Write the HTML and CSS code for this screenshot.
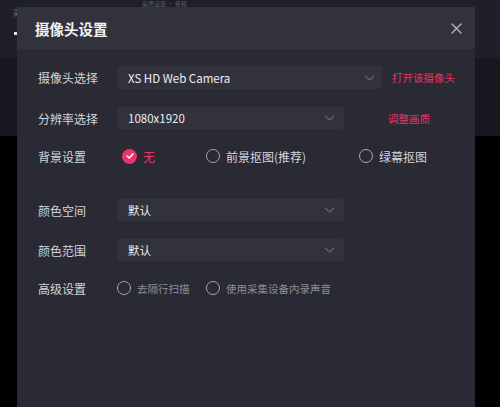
FILE: index.html
```html
<!DOCTYPE html>
<html lang="zh">
<head>
<meta charset="utf-8">
<link rel="stylesheet" href="styles.css">
</head>
<body>
<div class="page">
  <div class="topbar">
    <div class="bg-left">
      <span class="bg-small">采</span>
      <span class="bg-mark"></span>
    </div>
    <div class="bg-tabs">画质设置 · 音频</div>
  </div>
  <div class="band"></div>
  <div class="rest"></div>

  <div class="dialog">
    <div class="dlg-head">
      <span class="dlg-title">摄像头设置</span>
      <svg class="close" width="11" height="11" viewBox="0 0 11 11"><path d="M1 1L10 10M10 1L1 10" stroke="#b4b4bc" stroke-width="1.4" stroke-linecap="round"/></svg>
    </div>
    <div class="dlg-body">
      <div class="row r1">
        <span class="label">摄像头选择</span>
        <div class="select wide"><span>XS HD Web Camera</span><svg class="chev" width="11" height="6" viewBox="0 0 11 6"><path d="M1 1L5.5 5L10 1" fill="none" stroke="#666672" stroke-width="1.2"/></svg></div>
        <a class="link l1">打开该摄像头</a>
      </div>
      <div class="row r2">
        <span class="label">分辨率选择</span>
        <div class="select"><span>1080x1920</span><svg class="chev" width="11" height="6" viewBox="0 0 11 6"><path d="M1 1L5.5 5L10 1" fill="none" stroke="#666672" stroke-width="1.2"/></svg></div>
        <a class="link l2">调整画质</a>
      </div>
      <div class="row r3">
        <span class="label">背景设置</span>
        <div class="opt o-none checked"><span class="check"><svg width="8" height="6" viewBox="0 0 8 6"><path d="M1 3L3.2 5L7 1" fill="none" stroke="#fff" stroke-width="1.5" stroke-linecap="round" stroke-linejoin="round"/></svg></span><span>无</span></div>
        <div class="opt o-fg"><span class="radio"></span><span>前景抠图(推荐)</span></div>
        <div class="opt"><span class="radio"></span><span>绿幕抠图</span></div>
      </div>
      <div class="row r4">
        <span class="label">颜色空间</span>
        <div class="select"><span>默认</span><svg class="chev" width="11" height="6" viewBox="0 0 11 6"><path d="M1 1L5.5 5L10 1" fill="none" stroke="#666672" stroke-width="1.2"/></svg></div>
      </div>
      <div class="row r5">
        <span class="label">颜色范围</span>
        <div class="select"><span>默认</span><svg class="chev" width="11" height="6" viewBox="0 0 11 6"><path d="M1 1L5.5 5L10 1" fill="none" stroke="#666672" stroke-width="1.2"/></svg></div>
      </div>
      <div class="row r6">
        <span class="label">高级设置</span>
        <div class="opt small o-deint"><span class="radio"></span><span>去隔行扫描</span></div>
        <div class="opt small"><span class="radio"></span><span>使用采集设备内录声音</span></div>
      </div>
    </div>
  </div>
</div>
</body>
</html>
```
FILE: styles.css
```css
* { box-sizing: border-box; }
html, body { margin: 0; padding: 0; }
body {
  width: 500px; height: 407px; overflow: hidden;
  background: #000;
  font-family: "Noto Sans CJK SC", "Noto Sans", sans-serif;
}
.page { position: relative; width: 500px; height: 407px; display: flex; flex-direction: column; }
.topbar { height: 58px; background: #1f1f29; display: flex; }
.bg-left { width: 17px; display: flex; flex-direction: column; padding-left: 13px; }
.bg-small { font-size: 8px; color: #77777f; line-height: 9px; margin-top: 8px; }
.bg-mark { width: 4px; height: 3px; background: #e8e8ec; margin-top: 15px; margin-left: 1px; }
.bg-tabs { font-size: 6px; color: #5c5c66; padding-left: 125px; line-height: 7px; }
.band { height: 78px; background: #17171f; }
.rest { flex: 1; background: #000; }

.dialog {
  position: absolute; left: 17px; top: 7px; width: 458px; height: 420px;
  background: #2a2a35;
  display: flex; flex-direction: column;
}
.dlg-head {
  height: 42px; background: #32323d;
  display: flex; align-items: center; justify-content: space-between;
  padding: 0 13px 0 18px;
}
.dlg-title { color: #f2f2f4; font-size: 14.5px; font-weight: bold; }
.close { display: block; }

.dlg-body { padding: 17px 0 0 21px; display: flex; flex-direction: column; }
.row { display: flex; align-items: center; height: 23px; }
.r2 { margin-top: 18px; height: 22px; }
.r3 { margin-top: 16px; height: 22px; }
.r4 { margin-top: 32px; height: 22px; }
.r5 { margin-top: 18px; height: 22px; }
.r6 { margin-top: 16px; height: 22px; }

.label { width: 79px; font-size: 12px; color: #d4d4da; flex: none; }
.select {
  width: 227px; height: 100%;
  background: #32323d; border-radius: 2px;
  display: flex; align-items: center; justify-content: space-between;
  padding: 0 9px 0 11px;
  font-size: 11.5px; color: #eeeef0;
}
.select.wide { width: 265px; padding-right: 7px; }
.chev { display: block; }
.link { color: #e8336b; font-size: 10.5px; }
.l1 { margin-left: 10px; }
.l2 { margin-left: 44px; }

.opt { display: flex; align-items: center; font-size: 12px; color: #d4d4da; gap: 6px; }
.o-none { margin-left: 5px; width: 84px; color: #e8336b; }
.o-fg { width: 153px; }
.radio { width: 14px; height: 14px; border-radius: 50%; border: 1.3px solid #a8a8b0; flex: none; }
.check { width: 15px; height: 15px; border-radius: 50%; background: #e8336b; display: flex; align-items: center; justify-content: center; flex: none; }
.check svg { display: block; }
.opt.small { font-size: 10.5px; color: #8e8e98; }
.o-deint { width: 89px; }
```
